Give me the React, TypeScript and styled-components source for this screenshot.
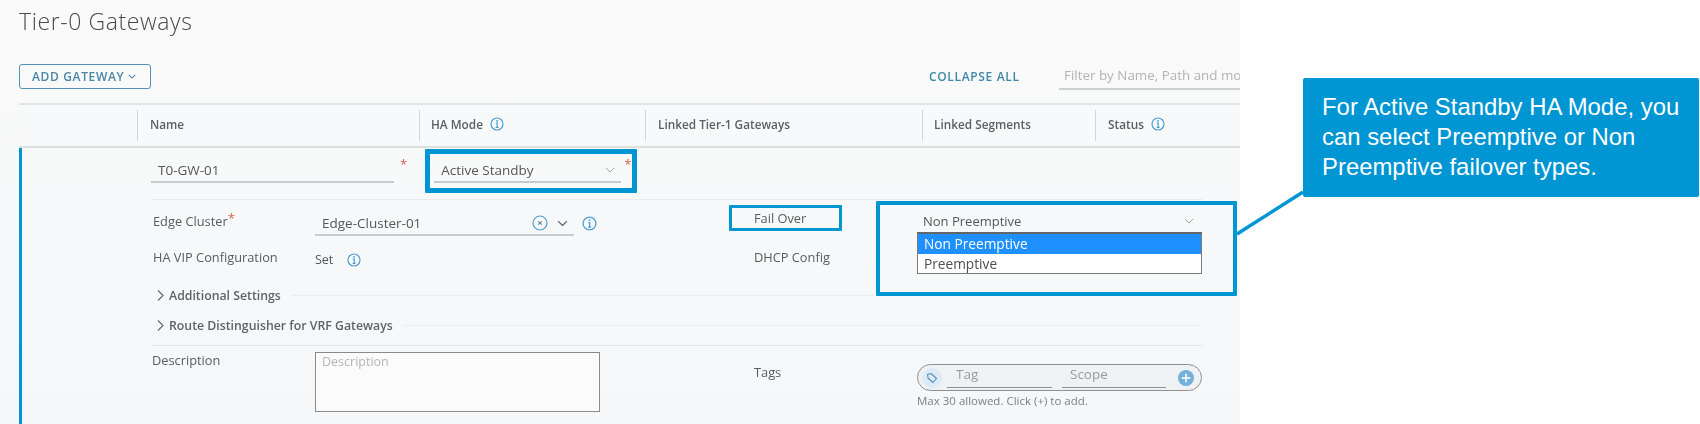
import React from "react";
import styled, { createGlobalStyle } from "styled-components";

const BLUE = "#0095d3";
const INFO = "#4f9fd4";

const Global = createGlobalStyle`
  html, body { margin: 0; padding: 0; background: #fff; overflow: hidden; }
  body { font-family: "Open Sans", "Liberation Sans", sans-serif; color: #565656; }
`;

const Stage = styled.div`
  position: relative;
  display: flex;
  width: 1700px;
  height: 424px;
  overflow: hidden;
`;

const Panel = styled.main`
  width: 1240px;
  height: 424px;
  box-sizing: border-box;
  padding-left: 19px;
  background: linear-gradient(#fafafa, #f6f7f9);
  overflow: hidden;
  flex: none;
  filter: blur(0.45px);
`;

const Title = styled.h1`
  margin: 0;
  height: 64px;
  padding-top: 6px;
  box-sizing: border-box;
  font-size: 23px;
  letter-spacing: 0.6px;
  line-height: 30px;
  font-weight: 300;
  color: #4a4a4a;
`;

const Toolbar = styled.div`
  display: flex;
  align-items: center;
  height: 25px;
  margin-bottom: 14px;
`;

const AddButton = styled.button`
  display: flex;
  align-items: center;
  gap: 4px;
  width: 132px;
  height: 25px;
  box-sizing: border-box;
  padding: 0 0 0 12px;
  background: transparent;
  border: 1.5px solid #4f94b4;
  border-radius: 3px;
  color: #4a87a6;
  font: 600 12px "Open Sans", sans-serif;
  letter-spacing: 0.65px;
  white-space: nowrap;
`;

const CollapseLink = styled.span`
  margin-left: 778px;
  width: 130px;
  flex: none;
  color: #3f87a8;
  font-size: 12px;
  font-weight: 600;
  letter-spacing: 0.65px;
  white-space: nowrap;
`;

const Filter = styled.div`
  flex: none;
  width: 181px;
  height: 26px;
  box-sizing: border-box;
  padding-left: 5px;
  border-bottom: 2px solid #cfd0d1;
  color: #b3b3b3;
  font-size: 13.4px;
  line-height: 22px;
  white-space: nowrap;
  overflow: hidden;
`;

const TableHead = styled.div`
  display: grid;
  grid-template-columns: 118px 282px 226px 277px 173px 145px;
  height: 45px;
  box-sizing: border-box;
  padding: 5px 0;
  border-top: 2px solid #e2e3e4;
  border-bottom: 2px solid #dedfe0;
  background: #f8f9fa;
`;

const HeadCell = styled.div`
  display: flex;
  align-items: center;
  gap: 7px;
  box-sizing: border-box;
  padding: 0 0 4px ${p => p.$pad ?? 12}px;
  height: 31px;
  border-left: ${p => (p.$blank ? "none" : "1px solid #d4d5d6")};
  font-size: 11.8px;
  font-weight: 600;
  color: #5c6064;
  white-space: nowrap;
`;

const RowBody = styled.section`
  height: 276px;
  box-sizing: border-box;
  padding: 0 38px 0 129px;
  border-left: 3px solid ${BLUE};
`;

const NameRow = styled.div`
  display: flex;
  height: 52px;
  box-sizing: border-box;
  padding-top: 11px;
  border-bottom: 1px solid #e9eaeb;
`;

const Underlined = styled.div`
  position: relative;
  display: flex;
  align-items: center;
  width: ${p => p.$w}px;
  height: 24px;
  box-sizing: border-box;
  padding-left: ${p => p.$pad ?? 7}px;
  margin-left: ${p => p.$ml ?? 0}px;
  margin-top: ${p => p.$mt ?? 0}px;
  border-bottom: 2px solid #c9cacb;
  font-size: 13.5px;
  color: #565656;
`;

const Required = styled.span`
  color: #d9634f;
  font-size: 13px;
  line-height: 1;
  margin: ${p => p.$m};
`;

const TrailingIcons = styled.span`
  margin-left: auto;
  display: flex;
  align-items: center;
  gap: ${p => p.$gap ?? 0}px;
  padding-right: ${p => p.$pr ?? 0}px;
`;

const FormRow = styled.div`
  display: grid;
  grid-template-columns: 164px 439px 163px 285px;
  height: ${p => p.$h}px;
  box-sizing: border-box;
  padding-top: ${p => p.$pt}px;
  align-items: start;
`;

const Label = styled.div`
  display: flex;
  font-size: 12.8px;
  line-height: 20px;
  color: #5b5b5b;
  margin-top: ${p => p.$mt ?? 0}px;
  padding-left: ${p => p.$pl ?? 0}px;
  white-space: nowrap;
`;

const ValueGroup = styled.div`
  display: flex;
  align-items: center;
  gap: ${p => p.$gap ?? 8}px;
  margin-top: ${p => p.$mt ?? 0}px;
  font-size: 12.5px;
  line-height: 20px;
`;

const SelectBox = styled.div`
  position: relative;
  display: flex;
  align-items: center;
  height: 22px;
  margin-top: -1px;
  padding: 0 8px 0 6px;
  font-size: 13px;
`;

const Menu = styled.ul`
  position: absolute;
  top: 22px;
  left: 0;
  width: 285px;
  height: 42px;
  box-sizing: border-box;
  margin: 0;
  padding: 0;
  list-style: none;
  background: #fff;
  border: 1px solid #7a7a7a;
  border-top: 2px solid #666;
  z-index: 2;
`;

const MenuItem = styled.li`
  height: 20px;
  padding-left: 6px;
  line-height: 20px;
  font-size: 13.7px;
  color: ${p => (p.$active ? "#fff" : "#4e4e4e")};
  background: ${p => (p.$active ? "#1e90ff" : "transparent")};
`;

const Accordion = styled.div`
  display: flex;
  align-items: center;
  gap: 4px;
  height: 30px;
  padding-left: 5px;
  font-size: 12.3px;
  font-weight: 600;
  color: #5f6266;
  white-space: nowrap;
  &::after {
    content: "";
    flex: 1;
    margin-left: 7px;
    border-top: 1px solid #ebecec;
  }
`;

const Rule = styled.hr`
  margin: 5px 0 0;
  border: 0;
  border-top: 1px solid #e6e7e8;
`;

const TextArea = styled.div`
  width: 285px;
  height: 60px;
  margin-top: 1px;
  box-sizing: border-box;
  padding: 0 6px;
  border: 1.5px solid #8b8b8b;
  background: #fbfbfb;
  color: #b5b5b5;
  font-size: 12.5px;
  line-height: 18px;
`;

const TagColumn = styled.div`
  margin-top: 13px;
`;

const TagPill = styled.div`
  display: flex;
  align-items: center;
  width: 285px;
  height: 27px;
  box-sizing: border-box;
  border: 1.5px solid #8f8f8f;
  border-radius: 14px;
  background: #eff2f5;
  padding-left: 4px;
`;

const TagBadge = styled.span`
  display: flex;
  align-items: center;
  justify-content: center;
  width: 20px;
  height: 20px;
  border-radius: 50%;
  background: #dcebf5;
  flex: none;
`;

const TagField = styled.div`
  width: ${p => p.$w}px;
  height: 21px;
  margin-left: ${p => p.$ml}px;
  box-sizing: border-box;
  padding-left: ${p => p.$pad}px;
  border-bottom: 1.5px solid #8f9092;
  color: #9a9a9a;
  font-size: 13.5px;
  line-height: 14px;
  flex: none;
`;

const Helper = styled.div`
  margin-top: 1px;
  font-size: 11.5px;
  line-height: 18px;
  color: #7f7f7f;
  white-space: nowrap;
`;

const Callout = styled.aside`
  position: absolute;
  left: 1303px;
  top: 78px;
  width: 396px;
  height: 119px;
  box-sizing: border-box;
  padding: 14px 10px 0 19px;
  background: ${BLUE};
  border-radius: 2px;
  color: #fff;
  font: 400 23.9px/30px "Liberation Sans", Arial, sans-serif;
`;

const Highlight = styled.div`
  position: absolute;
  left: ${p => p.$x}px;
  top: ${p => p.$y}px;
  width: ${p => p.$w}px;
  height: ${p => p.$h}px;
  box-sizing: border-box;
  border: ${p => p.$b}px solid ${BLUE};
  border-radius: 1px;
  pointer-events: none;
`;

const Connector = styled.svg`
  position: absolute;
  left: 1230px;
  top: 185px;
`;

const InfoIcon = ({ size = 14 }: { size?: number }) => (
  <svg width={size} height={size} viewBox="0 0 14 14" fill="none">
    <circle cx="7" cy="7" r="6" stroke={INFO} strokeWidth="1.2" />
    <circle cx="7" cy="4" r="0.9" fill={INFO} />
    <path d="M5.8 6.2H7.2V10.2M5.6 10.4H8.6" stroke={INFO} strokeWidth="1.2" />
  </svg>
);

const ChevronDown = ({ w = 10, color = "#a5a5a5", sw = 1 }: { w?: number; color?: string; sw?: number }) => (
  <svg width={w} height={w * 0.6} viewBox="0 0 10 6" fill="none">
    <path d="M1 1L5 5L9 1" stroke={color} strokeWidth={sw} />
  </svg>
);

const ChevronRight = () => (
  <svg width="9" height="13" viewBox="0 0 9 13" fill="none">
    <path d="M2 1.5L7 6.5L2 11.5" stroke="#6a6a6a" strokeWidth="1.2" />
  </svg>
);

const ClearIcon = () => (
  <svg width="16" height="16" viewBox="0 0 16 16" fill="none">
    <circle cx="8" cy="8" r="7" stroke={INFO} strokeWidth="1.2" />
    <path d="M6.3 6.3L9.7 9.7M9.7 6.3L6.3 9.7" stroke="#5c7f99" strokeWidth="1.1" />
  </svg>
);

const TagIcon = () => (
  <svg width="12" height="12" viewBox="0 0 12 12" fill="none">
    <path d="M1.5 2.5L5 1.5L10.5 6.5L7 10.5L2 6Z" stroke="#5b8fb3" strokeWidth="1.1" strokeLinejoin="round" />
  </svg>
);

const AddIcon = styled.svg`
  margin-left: 12px;
  flex: none;
`;

const PlusIcon = () => (
  <AddIcon width="16" height="16" viewBox="0 0 16 16">
    <circle cx="8" cy="8" r="8" fill="#74b2dc" />
    <path d="M8 3.8V12.2M3.8 8H12.2" stroke="#eef5fa" strokeWidth="1.8" />
  </AddIcon>
);

export default function App() {
  return (
    <Stage>
      <Global />
      <Panel>
        <Title>Tier-0 Gateways</Title>
        <Toolbar>
          <AddButton>
            ADD GATEWAY <ChevronDown w={8} color="#4a87a6" sw={1.3} />
          </AddButton>
          <CollapseLink>COLLAPSE ALL</CollapseLink>
          <Filter>Filter by Name, Path and more</Filter>
        </Toolbar>
        <TableHead>
          <HeadCell $blank />
          <HeadCell>Name</HeadCell>
          <HeadCell $pad={11}>
            HA Mode <InfoIcon />
          </HeadCell>
          <HeadCell>Linked Tier-1 Gateways</HeadCell>
          <HeadCell $pad={11}>Linked Segments</HeadCell>
          <HeadCell>
            Status <InfoIcon />
          </HeadCell>
        </TableHead>
        <RowBody>
          <NameRow>
            <Underlined $w={243}>T0-GW-01</Underlined>
            <Required $m="-1px 0 0 6px">*</Required>
            <Underlined $w={187} $ml={27}>
              Active Standby
              <TrailingIcons $pr={6}>
                <ChevronDown />
              </TrailingIcons>
            </Underlined>
            <Required $m="-1px 0 0 3px">*</Required>
          </NameRow>

          <FormRow $h={46} $pt={11}>
            <Label $pl={2}>
              Edge Cluster<Required $m="1px 0 0 0">*</Required>
            </Label>
            <ValueGroup $gap={8}>
              <Underlined $w={259} $mt={1}>
                Edge-Cluster-01
                <TrailingIcons $gap={9} $pr={6}>
                  <ClearIcon />
                  <ChevronDown w={11} color="#666" sw={1.2} />
                </TrailingIcons>
              </Underlined>
              <InfoIcon size={15} />
            </ValueGroup>
            <Label $mt={-3}>Fail Over</Label>
            <SelectBox>
              Non Preemptive
              <TrailingIcons>
                <ChevronDown />
              </TrailingIcons>
              <Menu>
                <MenuItem $active>Non Preemptive</MenuItem>
                <MenuItem>Preemptive</MenuItem>
              </Menu>
            </SelectBox>
          </FormRow>

          <FormRow $h={34} $pt={1}>
            <Label $pl={2}>HA VIP Configuration</Label>
            <ValueGroup $gap={14} $mt={3}>
              Set <InfoIcon />
            </ValueGroup>
            <Label>DHCP Config</Label>
          </FormRow>

          <Accordion>
            <ChevronRight /> Additional Settings
          </Accordion>
          <Accordion>
            <ChevronRight /> Route Distinguisher for VRF Gateways
          </Accordion>
          <Rule />

          <FormRow $h={70} $pt={5}>
            <Label $pl={1} $mt={-1}>Description</Label>
            <TextArea>Description</TextArea>
            <Label $mt={11}>Tags</Label>
            <TagColumn>
              <TagPill>
                <TagBadge>
                  <TagIcon />
                </TagBadge>
                <TagField $w={105} $ml={5} $pad={9}>
                  Tag
                </TagField>
                <TagField $w={104} $ml={10} $pad={8}>
                  Scope
                </TagField>
                <PlusIcon />
              </TagPill>
              <Helper>Max 30 allowed. Click (+) to add.</Helper>
            </TagColumn>
          </FormRow>
        </RowBody>
      </Panel>

      <Highlight $x={425} $y={149} $w={212} $h={44} $b={5} />
      <Highlight $x={729} $y={205} $w={113} $h={26} $b={3} />
      <Highlight $x={876} $y={201} $w={361} $h={95} $b={4} />
      <Connector width="80" height="56" viewBox="0 0 80 56">
        <path d="M7 49L73 7" stroke={BLUE} strokeWidth="3.5" fill="none" />
      </Connector>
      <Callout>
        For Active Standby HA Mode, you can select Preemptive or Non Preemptive failover types.
      </Callout>
    </Stage>
  );
}
